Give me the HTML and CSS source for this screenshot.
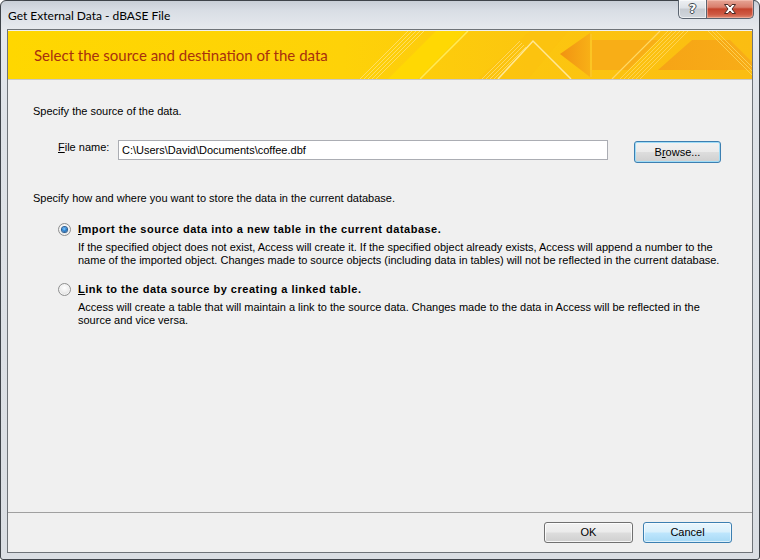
FILE: index.html
```html
<!DOCTYPE html>
<html>
<head>
<meta charset="utf-8">
<link rel="stylesheet" href="styles.css">
</head>
<body>
<div class="window">
  <div class="titlebar">
    <span class="title">Get External Data - dBASE File</span>
    <div class="caption-btns">
      <div class="cap help"><span>?</span></div>
      <div class="cap close">
        <svg width="16" height="12" viewBox="0 0 16 12">
          <path d="M2.5 1.5 H6 L8 4 L10 1.5 H13.5 L10 6 L13.5 10.5 H10 L8 8 L6 10.5 H2.5 L6 6 Z" fill="#fff" stroke="#4b2a26" stroke-width="1" stroke-linejoin="round"/>
        </svg>
      </div>
    </div>
  </div>
  <div class="client">
    <div class="banner">
      <svg class="banner-art" viewBox="0 0 744 48" preserveAspectRatio="none">
        <defs>
          <linearGradient id="bg" x1="0" y1="0" x2="1" y2="0">
            <stop offset="0" stop-color="#ffd700"/>
            <stop offset="0.45" stop-color="#fed208"/>
            <stop offset="0.7" stop-color="#fcc60f"/>
            <stop offset="1" stop-color="#fbbd12"/>
          </linearGradient>
          <linearGradient id="arrow" x1="0" y1="0" x2="1" y2="0">
            <stop offset="0" stop-color="#f19212"/>
            <stop offset="1" stop-color="#f8b016"/>
          </linearGradient>
          <linearGradient id="trap" x1="0" y1="0" x2="1" y2="0">
            <stop offset="0" stop-color="#f6a416"/>
            <stop offset="1" stop-color="#f8ad17"/>
          </linearGradient>
        </defs>
        <rect width="744" height="48" fill="url(#bg)"/>
        <polygon points="380,48 410,48 458,0 428,0" fill="#ffdd00" opacity="0.7"/>
        <g stroke="#ffe27a" stroke-width="1" opacity="0.8">
          <line x1="352" y1="48" x2="400" y2="0"/>
          <line x1="356" y1="48" x2="404" y2="0"/>
          <line x1="360" y1="48" x2="408" y2="0"/>
          <line x1="364" y1="48" x2="412" y2="0"/>
          <line x1="368" y1="48" x2="416" y2="0"/>
        </g>
        <line x1="412" y1="48" x2="460" y2="0" stroke="#ffeb55" stroke-width="1.5"/>
        <polygon points="470,48 522,0 560,0 520,48" fill="#fbc10f" opacity="0.6"/>
        <g stroke="#ffe07a" stroke-width="1" opacity="0.75">
          <line x1="474" y1="48" x2="512" y2="10"/>
          <line x1="478" y1="48" x2="514" y2="12"/>
          <line x1="482" y1="48" x2="516" y2="14"/>
          <line x1="486" y1="48" x2="518" y2="16"/>
        </g>
        <polyline points="490,48 525,10 563,48" fill="none" stroke="#ffe896" stroke-width="1.5"/>
        <polygon points="552,23 582,2 582,46" fill="url(#arrow)"/>
        <polygon points="584,9 650,9 620,39 584,39" fill="#f8ae17"/>
        <line x1="583" y1="3" x2="583" y2="46" stroke="#fcc633" stroke-width="1.2"/>
        <line x1="604" y1="48" x2="652" y2="0" stroke="#ffd866" stroke-width="1.2"/>
        <polygon points="650,39 684,9 722,9 744,31 744,39" fill="url(#trap)"/>
        <g stroke="#ffdb6a" stroke-width="1" opacity="0.75">
          <line x1="612" y1="48" x2="660" y2="0"/>
          <line x1="616" y1="48" x2="664" y2="0"/>
          <line x1="620" y1="48" x2="668" y2="0"/>
          <line x1="624" y1="48" x2="672" y2="0"/>
          <line x1="628" y1="48" x2="676" y2="0"/>
          <line x1="632" y1="48" x2="680" y2="0"/>
        </g>
        <g stroke="#ffd75c" stroke-width="1" opacity="0.8">
          <line x1="700" y1="0" x2="744" y2="44"/>
          <line x1="704" y1="0" x2="744" y2="40"/>
          <line x1="708" y1="0" x2="744" y2="36"/>
        </g>
      </svg>
      <h1 class="banner-title">Select the source and destination of the data</h1>
    </div>
    <div class="body">
      <p class="para first">Specify the source of the data.</p>
      <div class="file-row">
        <label class="file-label"><u>F</u>ile name:</label>
        <div class="input">C:\Users\David\Documents\coffee.dbf</div>
        <button class="btn btn-focus browse">B<u>r</u>owse...</button>
      </div>
      <p class="para second">Specify how and where you want to store the data in the current database.</p>
      <div class="option opt1">
        <span class="radio checked"><span class="dot"></span></span>
        <div class="opt-text">
          <div class="opt-title"><u>I</u>mport the source data into a new table in the current database.</div>
          <div class="opt-desc">If the specified object does not exist, Access will create it. If the specified object already exists, Access will append a number to the name of the imported object. Changes made to source objects (including data in tables) will not be reflected in the current database.</div>
        </div>
      </div>
      <div class="option opt2">
        <span class="radio"></span>
        <div class="opt-text">
          <div class="opt-title"><u>L</u>ink to the data source by creating a linked table.</div>
          <div class="opt-desc">Access will create a table that will maintain a link to the source data. Changes made to the data in Access will be reflected in the source and vice versa.</div>
        </div>
      </div>
    </div>
    <div class="footer">
      <button class="btn ok">OK</button>
      <button class="btn btn-blue cancel">Cancel</button>
    </div>
  </div>
</div>
</body>
</html>
```

FILE: styles.css
```css
html, body {
  margin: 0;
  padding: 0;
  width: 760px;
  height: 560px;
  overflow: hidden;
  background: #ffffff;
}

.window {
  box-sizing: border-box;
  width: 760px;
  height: 560px;
  border: 1px solid #3e4349;
  border-radius: 6px 6px 3px 3px;
  background: linear-gradient(to bottom, #c8ced6 0px, #d9dee5 10px, #e6e9ed 28px, #dee2e7 120px, #dadee3 100%);
  display: flex;
  flex-direction: column;
  padding: 0 6px 6px 6px;
}

.titlebar {
  height: 28px;
  display: flex;
  justify-content: space-between;
  align-items: flex-start;
  flex-shrink: 0;
}

.title {
  font-family: "Lato", "Liberation Sans", sans-serif;
  font-size: 12px;
  color: #000;
  margin: 8px 0 0 1px;
  line-height: 14px;
}

.caption-btns {
  display: flex;
  margin-top: -1px;
  margin-right: -1px;
}

.cap {
  height: 19px;
  box-sizing: border-box;
  border: 1px solid #5b6470;
  border-top: none;
  display: flex;
  align-items: center;
  justify-content: center;
}

.help {
  width: 28px;
  border-radius: 0 0 0 5px;
  border-right: none;
  background: linear-gradient(to bottom, #eef0f3 0%, #dde1e6 45%, #c5cad1 50%, #d2d7dd 100%);
  box-shadow: inset 0 0 0 1px rgba(255,255,255,0.6);
}

.help span {
  font-family: "DejaVu Sans", sans-serif;
  font-weight: bold;
  font-size: 13px;
  color: #fff;
  line-height: 14px;
  text-shadow: -1px 0 #3f4850, 1px 0 #3f4850, 0 -1px #3f4850, 0 1px #3f4850;
}

.close {
  width: 48px;
  border-radius: 0 0 5px 0;
  background: linear-gradient(to bottom, #e6a596 0%, #d97e6c 40%, #c4432d 50%, #cf5a44 80%, #e08a72 100%);
  box-shadow: inset 0 0 0 1px rgba(255,210,200,0.45);
}

.close svg {
  display: block;
}

.client {
  flex: 1;
  display: flex;
  flex-direction: column;
  border: 1px solid #6e7378;
  background: #f0f0f0;
  padding-top: 1px;
  min-height: 0;
}

.banner {
  position: relative;
  height: 48px;
  border-bottom: 1px solid #c8c8c8;
  display: flex;
  align-items: center;
  flex-shrink: 0;
  overflow: hidden;
}

.banner-art {
  position: absolute;
  left: 0;
  top: 0;
  width: 100%;
  height: 100%;
}

.banner-title {
  position: relative;
  margin: 0 0 0 26px;
  font-family: "Lato", "Liberation Sans", sans-serif;
  font-weight: normal;
  font-size: 15px;
  color: #a8300e;
  line-height: 18px;
}

.body {
  padding-left: 25px;
  font-family: "Liberation Sans", Arial, sans-serif;
  font-size: 11px;
  line-height: 13px;
  color: #000;
}

.para {
  margin: 0;
}

.para.first {
  margin-top: 25px;
}

.file-row {
  display: flex;
  align-items: flex-start;
  margin-top: 22px;
  padding-left: 25px;
}

.file-label {
  width: 60px;
  margin-top: 1px;
  line-height: 13px;
}

.input {
  box-sizing: border-box;
  width: 490px;
  height: 20px;
  border: 1px solid #abadb3;
  background: #fff;
  padding: 3px 2px 0 3px;
  line-height: 13px;
}

.btn {
  box-sizing: border-box;
  font-family: "Liberation Sans", Arial, sans-serif;
  font-size: 11px;
  color: #000;
  border: 1px solid #707070;
  border-radius: 3px;
  background: linear-gradient(to bottom, #f2f2f2 0%, #ebebeb 48%, #dddddd 52%, #cfcfcf 100%);
  box-shadow: inset 0 0 0 1px rgba(255,255,255,0.8);
  padding: 0;
  margin: 0;
  line-height: 13px;
}

.btn-focus {
  border-color: #3c7fb1;
  box-shadow: inset 0 0 0 1px #9fdcf7;
}

.btn-blue {
  border-color: #3c7fb1;
  background: linear-gradient(to bottom, #eaf6fd 0%, #d9f0fc 48%, #bee6fd 52%, #a7d9f5 100%);
  box-shadow: inset 0 0 0 1px rgba(255,255,255,0.6);
}

.browse {
  width: 87px;
  height: 22px;
  margin-left: 26px;
  margin-top: 1px;
}

.para.second {
  margin-top: 29px;
}

.option {
  display: flex;
  align-items: flex-start;
  padding-left: 25px;
}

.opt1 {
  margin-top: 18px;
}

.opt2 {
  margin-top: 16px;
}

.radio {
  box-sizing: border-box;
  width: 13px;
  height: 13px;
  border-radius: 50%;
  border: 1px solid #8e8f8f;
  background: radial-gradient(circle at 50% 35%, #ffffff 0%, #f1f1f1 40%, #d4d4d4 100%);
  box-shadow: inset 0 0 0 1px #f4f4f4;
  display: flex;
  align-items: center;
  justify-content: center;
  flex-shrink: 0;
  margin-right: 7px;
}

.radio .dot {
  width: 5px;
  height: 5px;
  border-radius: 50%;
  background: radial-gradient(circle at 45% 40%, #8ed0ff 0%, #2d86d6 45%, #0d3f7a 100%);
  box-shadow: 0 0 0 1px #2b5f95;
}

.opt-text {
  width: 650px;
}

.opt-title {
  font-weight: bold;
  line-height: 13px;
  letter-spacing: 0.5px;
}

.opt-desc {
  margin-top: 5px;
  line-height: 13px;
}

.footer {
  margin-top: auto;
  border-top: 1px solid #a0a0a0;
  padding: 9px 20px 9px 0;
  display: flex;
  justify-content: flex-end;
  gap: 10px;
}

.footer .btn {
  width: 89px;
  height: 21px;
}
```
